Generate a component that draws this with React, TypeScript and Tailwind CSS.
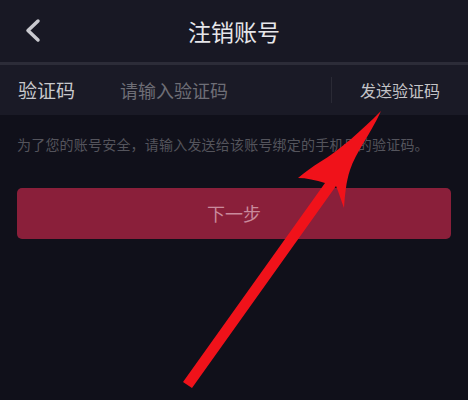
const FONT = "font-['Noto_Sans_CJK_SC','Noto_Sans',sans-serif]";

function Arrow() {
  return (
    <svg className="absolute left-0 top-0 pointer-events-none" width="468" height="400" viewBox="0 0 468 400">
      <path
        d="M381 111 C370 135 356 152 350 170 C346 182 345 195 344 208 C341 200 339 193 336 186 L192 388 L183 382 L325 183 C316 180 306 178 298 178 C305 172 312 167 320 162 C340 150 362 130 381 111 Z"
        fill="#f0121a"
      />
    </svg>
  );
}

export default function App() {
  return (
    <div className={`relative w-[468px] h-[400px] overflow-hidden bg-[#10101a] ${FONT}`}>
      {/* Header */}
      <div className="relative h-[62px] flex items-center justify-center bg-[#181824]">
        <svg className="absolute left-[24px] top-[18px]" width="18" height="25" viewBox="0 0 18 25">
          <path d="M14 3 L4 12.5 L14 22" fill="none" stroke="#c9c9cf" strokeWidth="3.5" strokeLinecap="round" strokeLinejoin="round" />
        </svg>
        <h1 className="text-[23px] text-[#e6e6ea] leading-none">注销账号</h1>
      </div>
      <div className="h-[3px] bg-[#2c2c38]" />

      {/* Code row */}
      <div className="h-[50px] flex items-center bg-[#1a1a26] pl-[18px] pr-[28px]">
        <span className="text-[19px] text-[#c8c8cc] w-[102px]">验证码</span>
        <span className="text-[18px] text-[#6e6e76] flex-1">请输入验证码</span>
        <div className="w-px h-[26px] bg-[#2a2a35] mr-[28px]" />
        <span className="text-[16px] text-[#c4c4c8]">发送验证码</span>
      </div>

      {/* Hint */}
      <p className="mt-[19px] px-[17px] text-[14px] tracking-[0.2px] text-[#54545c] leading-[20px]">
        为了您的账号安全，请输入发送给该账号绑定的手机号的验证码。
      </p>

      {/* Button */}
      <div className="px-[17px] mt-[34px]">
        <button className="w-full h-[51px] rounded-[5px] bg-[#8a1f3a] text-[18px] text-[#c98a9c]">
          下一步
        </button>
      </div>

      <Arrow />
    </div>
  );
}
